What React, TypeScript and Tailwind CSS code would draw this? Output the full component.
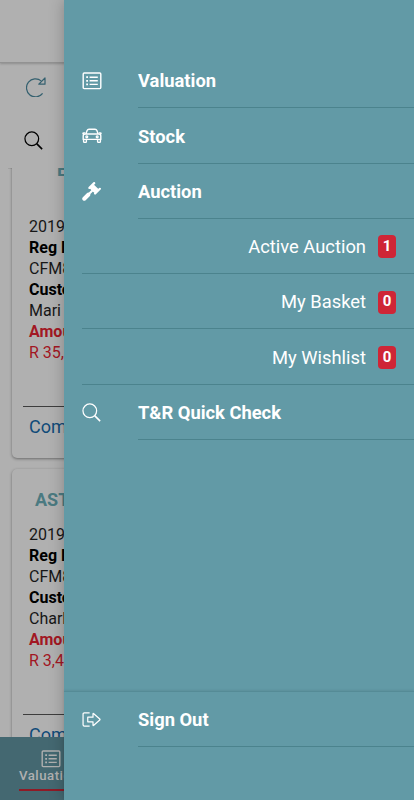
import type { ReactNode } from 'react'
import { clsx } from 'clsx'

type IconProps = { className?: string }

function ListIcon({ className }: IconProps) {
  return (
    <svg viewBox="0 0 20 18" fill="none" stroke="currentColor" strokeWidth="1.4" className={className}>
      <rect x="1.2" y="1" width="17.6" height="15.6" rx="1" />
      <path d="M7.6 5.2h8.2M7.6 8.8h8.2M7.6 12.4h8.2" />
      <path d="M4.2 5.2H6M4.2 8.8H6M4.2 12.4H6" strokeWidth="1.8" />
    </svg>
  )
}

function CarIcon({ className }: IconProps) {
  return (
    <svg viewBox="0 0 20 18" fill="none" stroke="currentColor" strokeWidth="1.4" strokeLinejoin="round" className={className}>
      <path d="M3.9 7 5.1 3.6Q5.6 2.2 7 2.2h6q1.4 0 1.9 1.4L16.1 7M3.2 7h13.6q2 0 2 2v3.4H1.2V9q0-2 2-2Z" />
      <path d="M3.3 5.9H1.6q-1 0-.5.9l1 .8M16.7 5.9h1.7q1 0 .5.9l-1 .8M1.6 12.4v2.2q0 .8.8.8h1.2q.8 0 .8-.8v-2.2M15.6 12.4v2.2q0 .8.8.8h1.2q.8 0 .8-.8v-2.2" />
      <circle cx="4.8" cy="9.8" r=".9" />
      <circle cx="15.2" cy="9.8" r=".9" />
    </svg>
  )
}

function GavelIcon({ className }: IconProps) {
  return (
    <svg viewBox="0 0 20 20" fill="none" stroke="currentColor" strokeLinecap="round" className={className}>
      {/* Handle */}
      <path d="m2.4 17.6 4.2-4.2" strokeWidth="4.2" />
      <path d="m7 13 4-4" strokeWidth="2.2" />
      {/* Head */}
      <path d="m10.2 5 4.8 4.8" strokeWidth="5.4" strokeLinecap="butt" />
      <path d="m7.8 6.2 5-5M13.8 12.2l5-5" strokeWidth="2.3" />
      <path d="m10.6 4.8 4.6 4.6" strokeWidth="5.6" strokeLinecap="butt" />
    </svg>
  )
}

function SearchIcon({ className }: IconProps) {
  return (
    <svg viewBox="0 0 20 20" fill="none" stroke="currentColor" strokeWidth="1.3" className={className}>
      <circle cx="8.2" cy="8.2" r="7.2" />
      <path d="m13.3 13.3 5.8 5.8" strokeWidth="1.6" />
    </svg>
  )
}

function SignOutIcon({ className }: IconProps) {
  return (
    <svg viewBox="0 0 20 16" fill="none" stroke="currentColor" strokeWidth="1.3" strokeLinejoin="round" className={className}>
      <path d="M8 1H2.4Q1 1 1 2.4v11.2Q1 15 2.4 15H8" />
      <path d="M6 5.5h5.6V2.1q0-1 .8-.3l6.4 5.6q.6.6 0 1.2l-6.4 5.6q-.8.7-.8-.3v-3.4H6Z" />
    </svg>
  )
}

function RefreshIcon({ className }: IconProps) {
  return (
    <svg viewBox="0 0 20 20" fill="none" stroke="currentColor" strokeWidth="1.2" strokeLinejoin="round" className={className}>
      <path d="M16.6 16.4A9 9 0 1 1 15.2 3.9" />
      <path d="M19 1v6.2h-6.2Z" />
    </svg>
  )
}

interface Vehicle {
  title: string
  customer: string
  amount: string
}

function VehicleCard({ title, customer, amount, first }: Vehicle & { first?: boolean }) {
  return (
    <div
      className={clsx(
        'ml-3 w-[390px] shrink-0 rounded-[5px] bg-[#b0b0b0] shadow-[0_1px_3px_rgba(0,0,0,0.4)]',
        first ? 'h-[320px] -mt-[30px]' : 'mt-[11px] h-[320px]'
      )}
    >
      <h2
        className={clsx(
          'text-[18px] leading-[22px] font-bold text-[#4b7a81]',
          first ? 'pt-[21px] pl-[45px]' : 'pt-[20px] pl-[23px]'
        )}
      >
        {title}
      </h2>
      <div
        className={clsx(
          'ml-[17px] text-[16px] leading-[21px] whitespace-nowrap text-[#171717]',
          first ? 'mt-[35px]' : 'mt-[13px]'
        )}
      >
        <p>2019</p>
        <p className="font-bold text-black">Reg No</p>
        <p>CFM8</p>
        <p className="font-bold text-black">Customer</p>
        <p>{customer}</p>
        <p className="font-bold text-[#a21723]">Amount</p>
        <p className="text-[#a21723]">{amount}</p>
      </div>
      <div className="mt-[43px] ml-[11px] border-t border-[#3d3d3d] pt-[8px] pl-[6px] text-[18px] leading-[24px] text-[#114b79]">
        Comments
      </div>
    </div>
  )
}

interface MenuItemProps {
  icon: ReactNode
  label: string
}

function MenuItem({ icon, label }: MenuItemProps) {
  return (
    <div className="flex h-[55.25px] shrink-0 pl-[18px]">
      <div className="flex w-14 items-center">{icon}</div>
      <div className="flex flex-1 items-center border-b border-[#4b838d] pt-[2px] text-[18.35px] font-bold">{label}</div>
    </div>
  )
}

function SubItem({ label, count }: { label: string; count: number }) {
  return (
    <div className="ml-[18px] flex h-[55.25px] shrink-0 items-center justify-end gap-3 border-b border-[#4b838d] pt-[2px] pr-[18px] text-[18.35px]">
      <span>{label}</span>
      <span className="flex h-[23px] w-[18px] items-center justify-center rounded-[4px] bg-[#cf2536] pb-px text-[15px] font-bold">
        {count}
      </span>
    </div>
  )
}

export default function App() {
  return (
    <div className="relative h-[800px] w-[414px] overflow-hidden bg-[#b0b0b0] font-['Roboto',sans-serif]">
      {/* Page behind the menu */}
      <div className="flex h-full flex-col">
        <header className="h-[63px] shrink-0 border-b border-[#929292] shadow-[0_1px_2px_rgba(0,0,0,0.2)]" />
        <div className="flex h-[106px] shrink-0 flex-col pl-6">
          <RefreshIcon className="mt-[14px] ml-[2px] h-5 w-5 text-[#34606f]" />
          <SearchIcon className="mt-[34px] h-[19px] w-[19px] text-black" />
          <div className="mt-auto -ml-4 border-b border-[#a0a0a0]" />
        </div>
        <main className="-mt-px flex min-h-0 flex-1 flex-col overflow-hidden">
          <VehicleCard title="EVEREST" customer="Mari" amount="R 35,000" first />
          <VehicleCard title="ASTRA" customer="Charl" amount="R 3,400" />
        </main>
        <nav className="flex h-[63px] shrink-0 bg-[#446871] text-[#b0b0b0]">
          <div className="ml-[19px] flex h-[54px] w-[64px] flex-col items-center border-b-2 border-[#8f1a26] pt-[13px]">
            <ListIcon className="h-[18px] w-5" />
            <span className="self-start text-[13.2px] leading-[15px] font-medium tracking-[0.5px]">Valuation</span>
          </div>
        </nav>
      </div>

      {/* Slide-in menu */}
      <aside className="absolute inset-y-0 right-0 flex w-[350px] flex-col bg-[#629aa6] pt-[53px] text-white shadow-[0_0_14px_rgba(0,0,0,0.25)]">
        <MenuItem icon={<ListIcon className="h-[18px] w-5" />} label="Valuation" />
        <MenuItem icon={<CarIcon className="h-[18px] w-5" />} label="Stock" />
        <MenuItem icon={<GavelIcon className="h-[19px] w-[19px]" />} label="Auction" />
        <SubItem label="Active Auction" count={1} />
        <SubItem label="My Basket" count={0} />
        <SubItem label="My Wishlist" count={0} />
        <MenuItem icon={<SearchIcon className="h-[19px] w-[19px]" />} label="T&R Quick Check" />
        <footer className="mt-auto h-[109px] border-t border-[#558b96] shadow-[0_-1px_2px_rgba(0,0,0,0.08)]">
          <MenuItem icon={<SignOutIcon className="h-[15px] w-[19px]" />} label="Sign Out" />
        </footer>
      </aside>
    </div>
  )
}
